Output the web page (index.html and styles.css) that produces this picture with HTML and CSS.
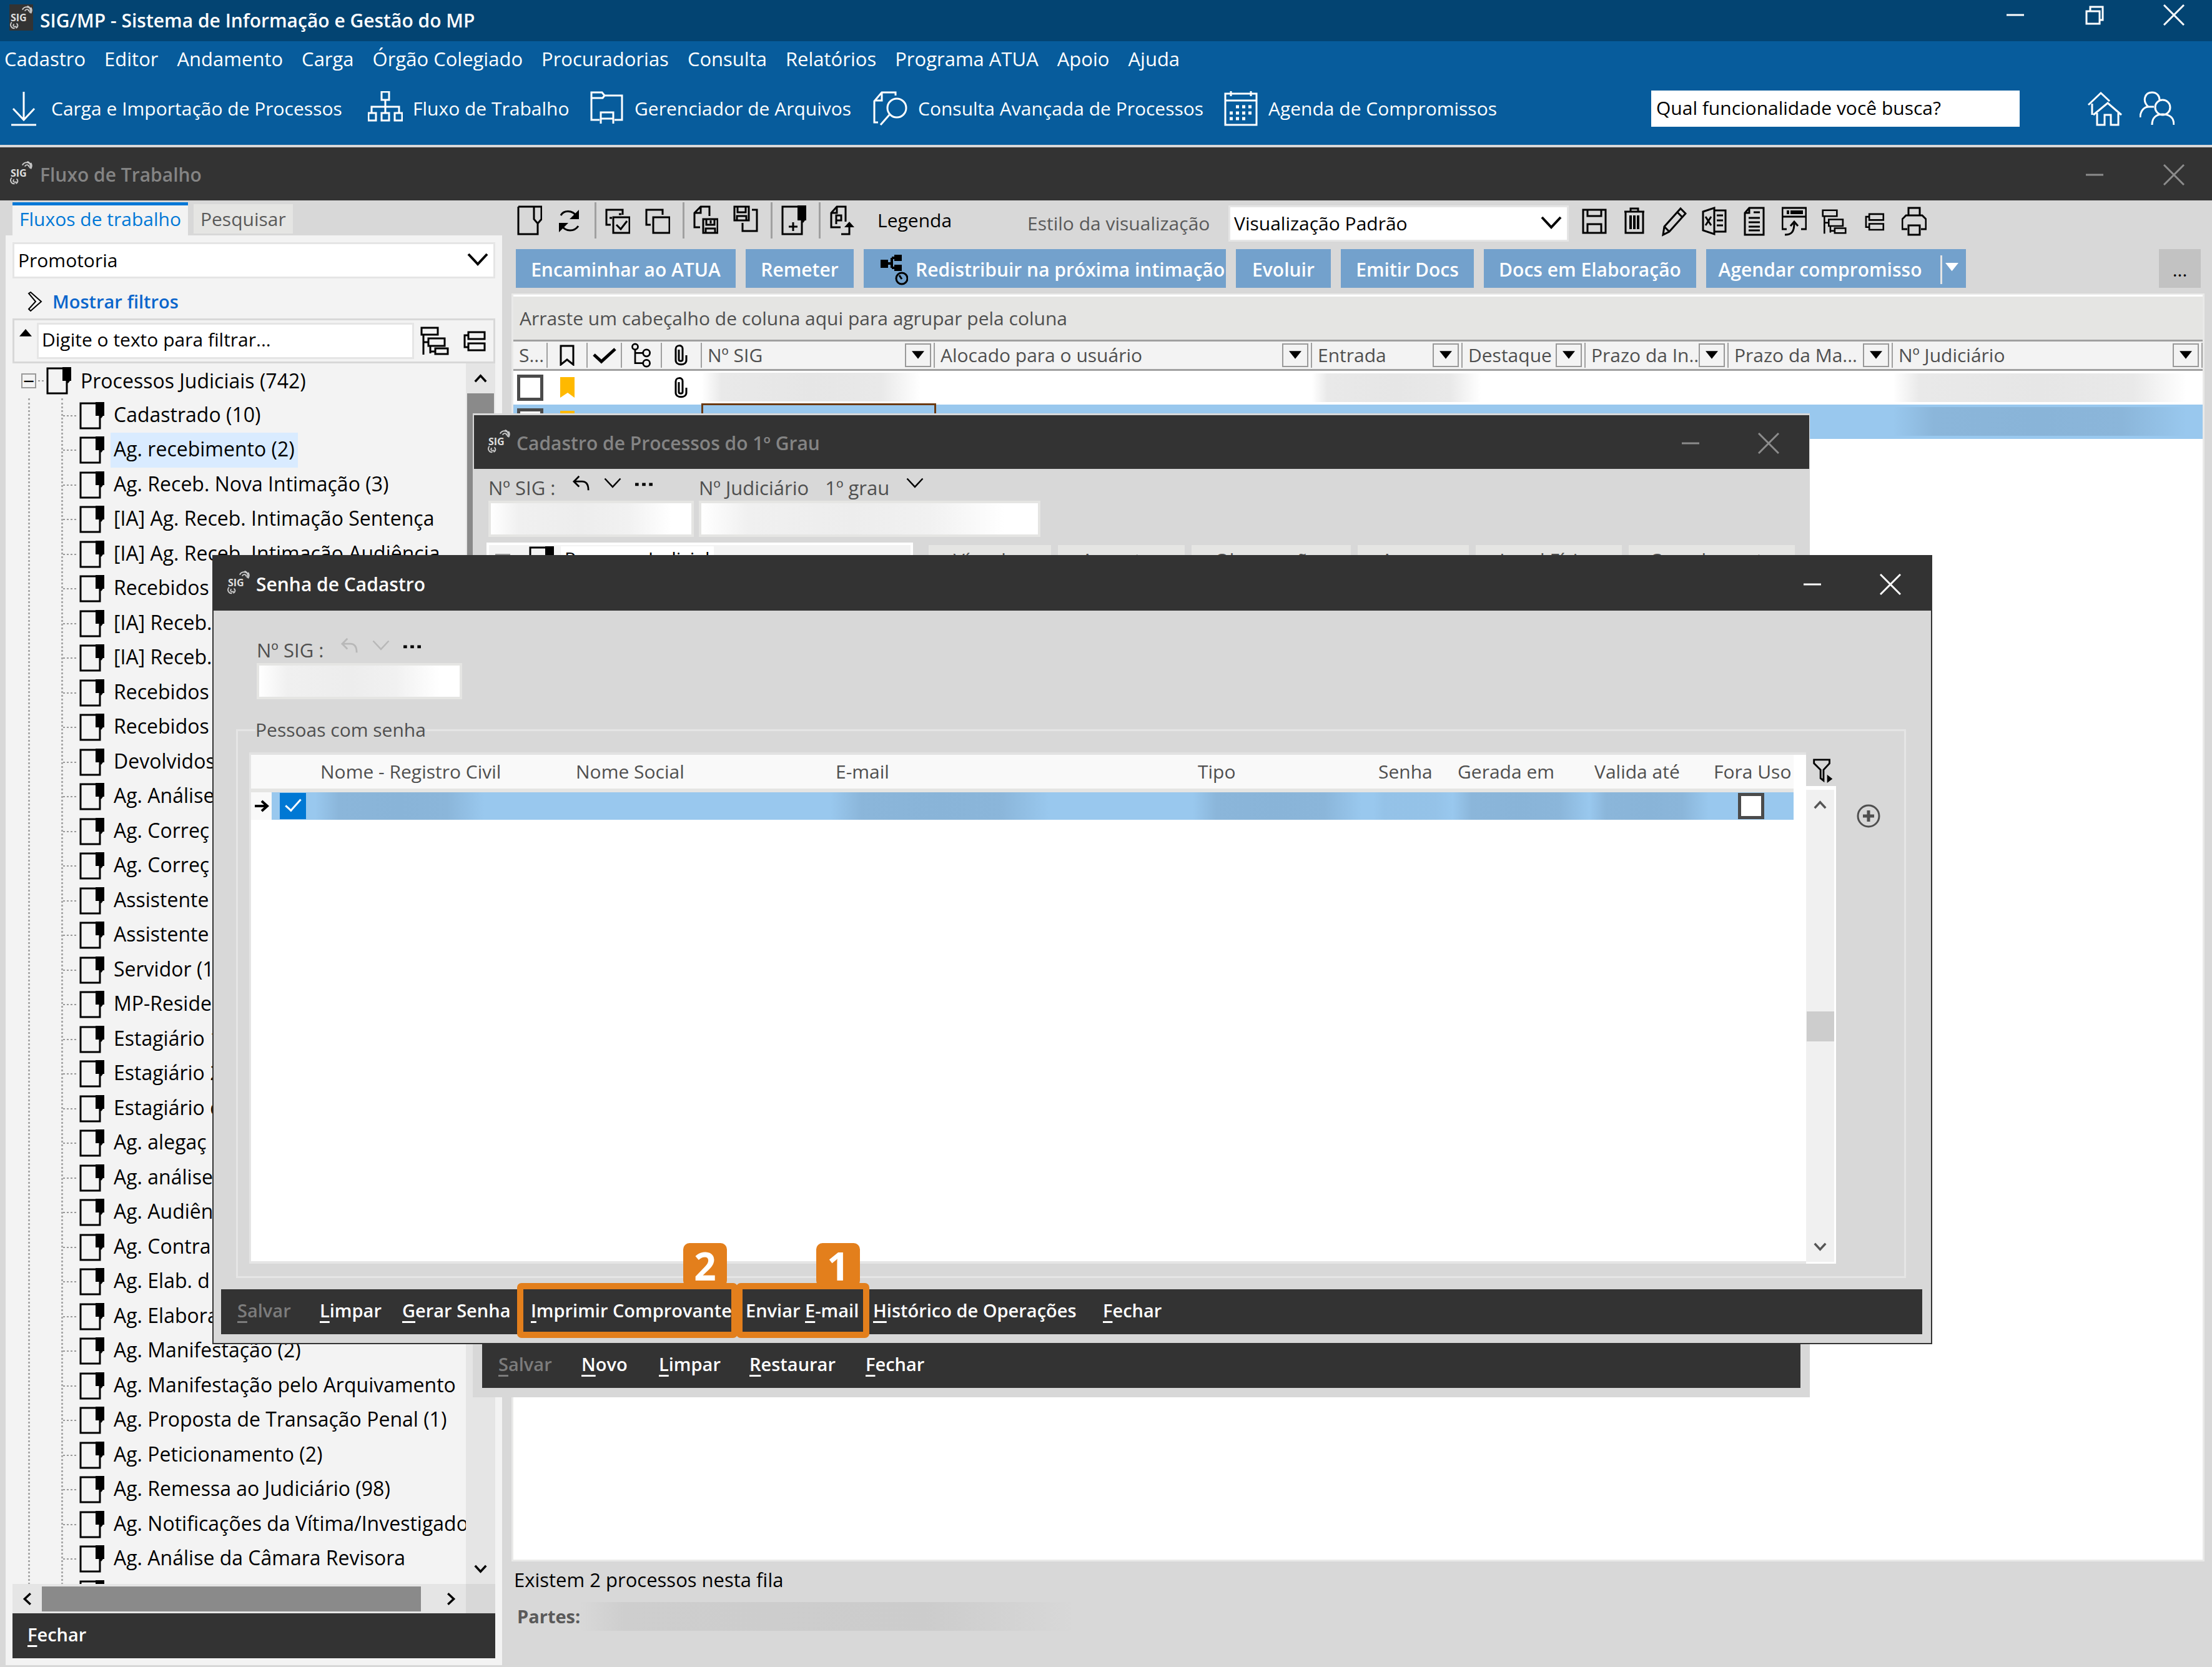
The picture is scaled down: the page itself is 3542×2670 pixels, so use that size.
FILE: index.html
```html
<!DOCTYPE html>
<html lang="pt-BR">
<head>
<meta charset="utf-8">
<title>SIG/MP - Sistema de Informação e Gestão do MP</title>
<link rel="stylesheet" href="styles.css">
</head>
<body>
<svg class="defs" aria-hidden="true">
  <symbol id="logo" viewBox="0 0 40 42"><text x="2" y="27" class="logo-text">SIG</text><path d="M22 8c2-5 8-6 12-3M26 10c2-4 7-3 7 1M30 2c5 1 7 7 4 11M36 4c2 3 2 7 0 10" /><path d="M4 29c-4 4-1 11 5 10M8 32c-3 2-1 6 4 4M12 31c3 2 3 6-1 8" /></symbol>
  <symbol id="min" viewBox="0 0 34 34"><path d="M3 17h28"/></symbol>
  <symbol id="restore" viewBox="0 0 34 34"><path d="M4 11h21v20H4zM10 11V4h20v21h-5"/></symbol>
  <symbol id="close" viewBox="0 0 34 34"><path d="M1 1l32 32M33 1L1 33"/></symbol>
  <symbol id="import" viewBox="0 0 56 56"><path d="M28 1v46M11 28l17 18 17-18M8 54h40"/></symbol>
  <symbol id="flow" viewBox="0 0 56 56"><path d="M22 1h12v13H22zM28 14v21M6 35V25h44v10M1 35h12v12H1zM22 35h12v12H22zM43 35h12v12H43z"/></symbol>
  <symbol id="folder" viewBox="0 0 56 56"><path d="M16 46H3V2h17l4 5h28v39H40M3 11h18l3-4M18 52V34h20v18M18 44h20"/></symbol>
  <symbol id="search" viewBox="0 0 56 56"><path d="M8 50H2V16L14 2h22v5M14 2v13H3M12 54l14-16"/><circle cx="38" cy="27" r="15"/></symbol>
  <symbol id="calendar" viewBox="0 0 56 56"><path d="M3 4h50v50H3zM3 15h50M12 0v8M44 0v8"/><path d="M20 25h26M10 35h36M10 44h26" stroke-dasharray="5 5" stroke-width="5"/></symbol>
  <symbol id="home" viewBox="0 0 56 56"><path d="M8 38V20M2 22L22 3l14 13M10 38l23-19 22 19M16 35v19h12V38h10v16h12V35"/></symbol>
  <symbol id="users" viewBox="0 0 56 56"><path d="M14 25C4 16 8 2 20 2c8 0 12 6 12 12M1 42c0-10 6-17 14-17h8M20 54c0-12 7-17 17-17s18 5 18 17"/><circle cx="37" cy="26" r="12"/></symbol>
  <symbol id="chev" viewBox="0 0 36 24"><path d="M3 3l15 16L33 3"/></symbol>
  <symbol id="dbl" viewBox="0 0 24 32"><path d="M2 3l3-2 17 15L5 31l-3-3 11-12z"/></symbol>
  <symbol id="treeexp" viewBox="0 0 46 46"><path d="M2 2h26v11H2zM13 19h26v12H13zM24 35h20v9H24zM5 13v32M5 25h8M16 31v12M16 40h8"/></symbol>
  <symbol id="treecol" viewBox="0 0 46 46"><path d="M14 9h26v11H14zM14 27h26v11H14zM14 14H8v19h6"/></symbol>
  <symbol id="doc" viewBox="0 0 40 44"><path d="M2 2h31v40H2z"/><path class="solid" d="M26 0h14v22h-2l-3 4-3-4h-6z"/></symbol>
  <symbol id="doclight" viewBox="0 0 40 48"><path d="M2 2h37v20l-6 7-6-7V2M2 2v44h31V27"/></symbol>
  <symbol id="refresh" viewBox="0 0 40 48"><path d="M6 16c4-8 18-10 26 2M34 33C28 42 14 43 7 32"/><path class="solid" d="M35 7v15H20zM3 43V28h15z"/></symbol>
  <symbol id="checkall" viewBox="0 0 40 48"><path d="M9 31H2V7h26v8M13 19h26v25H13zM18 31l7 7 10-13M7 20h4M22 14h4"/></symbol>
  <symbol id="uncheck" viewBox="0 0 40 48"><path d="M9 31H2V7h26v8M13 19h26v25H13z"/></symbol>
  <symbol id="docsave" viewBox="0 0 40 48"><path d="M11 35H2V12L12 2h14v15M12 2v10H2M16 22h23v22H16zM21 22v9h13v-9M20 44v-7h15v7M28 24v5"/></symbol>
  <symbol id="savedoc" viewBox="0 0 40 48"><path d="M2 2h23v22H2zM7 2v9h13V2M6 24v-7h15v7M30 7h8v34H15V28"/></symbol>
  <symbol id="docadd" viewBox="0 0 40 48"><path d="M2 2h31v44H2zM12 34h14M19 27v14"/><path class="solid" d="M26 0h14v24h-2l-3 4-3-4h-6z"/></symbol>
  <symbol id="docp" viewBox="0 0 40 48"><path d="M18 35H3V12L12 2h14v24M12 2v10H3M11 30V16h8v8h-8M19 46h13V32"/><path class="solid" d="M24 35l8-9 8 9z"/></symbol>
  <symbol id="save" viewBox="0 0 40 48"><path d="M2 5h36v37H2zM9 5v10h22V5M9 42V28h22v14"/></symbol>
  <symbol id="trash" viewBox="0 0 40 48"><path d="M4 8h32M14 8V3h12v5M6 8v34h28V8"/><path d="M14 14v22M20 14v22M26 14v22" stroke-width="4"/></symbol>
  <symbol id="pencil" viewBox="0 0 40 48"><path d="M2 45l2-13L30 3l8 8-26 29zM25 9l8 8M4 32l8 8"/></symbol>
  <symbol id="excel" viewBox="0 0 40 48"><path d="M2 8L20 2v42L2 38zM20 6h18v34H20M6 16l9 14M15 16L6 30M24 14h10M24 22h10M24 30h10"/></symbol>
  <symbol id="page" viewBox="0 0 40 48"><path d="M12 2h23v43H5V10zM12 2v8H5M19 9h10M11 18h18M11 25h18M11 32h18M11 38h18"/></symbol>
  <symbol id="panel" viewBox="0 0 40 48"><path d="M8 36H1V2h38v34h-8M1 16h38M5 45c10 0 15-4 15-18M14 31l6-7 6 7"/><path d="M8 9h4M14 9h20" stroke-width="6"/></symbol>
  <symbol id="printer" viewBox="0 0 40 48"><path d="M11 14V2h18v12M9 36H1V20l6-6h26l6 6v16h-8M11 30h18v15H11z"/></symbol>
  <symbol id="branch" viewBox="0 0 44 50"><path class="solid" d="M0 9h12v13H0zM22 1h12v10H22zM22 17h12v10H22z"/><path d="M12 15h6M18 6v16M18 6h5M18 22h5" stroke-width="4"/><circle cx="34" cy="39" r="9"/><path d="M30 34l4 6"/></symbol>
  <symbol id="bookmark" viewBox="0 0 24 34"><path d="M2 2h20v30l-10-8-10 8z"/></symbol>
  <symbol id="flag" viewBox="0 0 24 34"><path d="M0 0h23v33l-11-8-12 8z"/></symbol>
  <symbol id="tick" viewBox="0 0 38 34"><path d="M2 16l12 11L36 7" stroke-width="5"/></symbol>
  <symbol id="nodes" viewBox="0 0 38 44"><circle cx="8" cy="7" r="5"/><circle cx="28" cy="18" r="6"/><circle cx="28" cy="36" r="6"/><path d="M8 12v24h14M8 18h14"/></symbol>
  <symbol id="clip" viewBox="0 0 24 34"><path d="M8 8v16c0 3 6 3 6 0V6C14 0 3 0 3 7v18c0 9 17 9 17 0v-8"/></symbol>
  <symbol id="undo" viewBox="0 0 32 28"><path d="M12 2L3 11l9 9M3 11h14c7 0 11 5 11 15"/></symbol>
  <symbol id="dots" viewBox="0 0 32 28"><path d="M1 16h6M13 16h6M25 16h6" stroke-width="5"/></symbol>
  <symbol id="filter" viewBox="0 0 34 44"><path d="M2 3h26v6L18 20v18l-5-4V20L2 9z"/><path class="solid" d="M24 28l9 7-9 7z"/></symbol>
  <symbol id="plus" viewBox="0 0 40 40"><circle cx="20" cy="20" r="17"/><path d="M20 11v18M11 20h18" stroke-width="5"/></symbol>
  <symbol id="arrow" viewBox="0 0 24 24"><path d="M1 12h19M12 4l9 8-9 8" stroke-width="4"/></symbol>
  <symbol id="down" viewBox="0 0 24 16"><path class="solid" d="M0 0h24L12 15z"/></symbol>
  <symbol id="up" viewBox="0 0 24 16"><path class="solid" d="M0 16h24L12 2z"/></symbol>
</svg>

<header class="titlebar main-title">
  <svg class="logo boxed"><use href="#logo"/></svg>
  <h1>SIG/MP - Sistema de Informação e Gestão do MP</h1>
  <div class="controls"><button aria-label="Minimizar"><svg><use href="#min"/></svg></button><button aria-label="Restaurar"><svg><use href="#restore"/></svg></button><button aria-label="Fechar"><svg><use href="#close"/></svg></button></div>
</header>
<div class="ribbon">
  <nav class="menu"><a href="#">Cadastro</a><a href="#">Editor</a><a href="#">Andamento</a><a href="#">Carga</a><a href="#">Órgão Colegiado</a><a href="#">Procuradorias</a><a href="#">Consulta</a><a href="#">Relatórios</a><a href="#">Programa ATUA</a><a href="#">Apoio</a><a href="#">Ajuda</a></nav>
  <div class="shortcuts">
    <button class="s1"><svg><use href="#import"/></svg>Carga e Importação de Processos</button>
    <button class="s2"><svg><use href="#flow"/></svg>Fluxo de Trabalho</button>
    <button class="s3"><svg><use href="#folder"/></svg>Gerenciador de Arquivos</button>
    <button class="s4"><svg><use href="#search"/></svg>Consulta Avançada de Processos</button>
    <button class="s5"><svg><use href="#calendar"/></svg>Agenda de Compromissos</button>
    <input class="quick" type="text" aria-label="Busca de funcionalidade" value="Qual funcionalidade você busca?">
    <button aria-label="Início"><svg><use href="#home"/></svg></button>
    <button aria-label="Usuários"><svg><use href="#users"/></svg></button>
  </div>
</div>
<div class="titlebar flow-title inactive">
  <svg class="logo"><use href="#logo"/></svg>
  <h2>Fluxo de Trabalho</h2>
  <div class="controls"><button aria-label="Minimizar"><svg><use href="#min"/></svg></button><button aria-label="Fechar"><svg><use href="#close"/></svg></button></div>
</div>

<main class="workspace">
  <aside class="side">
    <div class="tabs"><button class="active">Fluxos de trabalho</button><button>Pesquisar</button></div>
    <div class="side-body">
      <div class="combo"><select aria-label="Unidade"><option>Promotoria</option></select><svg><use href="#chev"/></svg></div>
      <button class="show-filters"><svg><use href="#dbl"/></svg>Mostrar filtros</button>
      <div class="filter-row">
        <svg class="sort"><use href="#up"/></svg>
        <input type="text" aria-label="Filtro" value="Digite o texto para filtrar...">
        <button aria-label="Expandir"><svg><use href="#treeexp"/></svg></button>
        <button aria-label="Recolher"><svg><use href="#treecol"/></svg></button>
      </div>
      <div class="tree-area">
        <div class="tree">
          <div class="root"><button class="toggle" aria-label="Recolher">−</button><i class="dots"></i><svg class="doc"><use href="#doc"/></svg><span>Processos Judiciais (742)</span></div>
          <div class="trunk"><ul>
            <li><i class="dots"></i><svg class="doc"><use href="#doc"/></svg><span>Cadastrado (10)</span></li>
            <li><i class="dots"></i><svg class="doc"><use href="#doc"/></svg><span class="selected">Ag. recebimento (2)</span></li>
            <li><i class="dots"></i><svg class="doc"><use href="#doc"/></svg><span>Ag. Receb. Nova Intimação (3)</span></li>
            <li><i class="dots"></i><svg class="doc"><use href="#doc"/></svg><span>[IA] Ag. Receb. Intimação Sentença</span></li>
            <li><i class="dots"></i><svg class="doc"><use href="#doc"/></svg><span>[IA] Ag. Receb. Intimação Audiência</span></li>
            <li><i class="dots"></i><svg class="doc"><use href="#doc"/></svg><span>Recebidos</span></li>
            <li><i class="dots"></i><svg class="doc"><use href="#doc"/></svg><span>[IA] Receb.</span></li>
            <li><i class="dots"></i><svg class="doc"><use href="#doc"/></svg><span>[IA] Receb.</span></li>
            <li><i class="dots"></i><svg class="doc"><use href="#doc"/></svg><span>Recebidos</span></li>
            <li><i class="dots"></i><svg class="doc"><use href="#doc"/></svg><span>Recebidos</span></li>
            <li><i class="dots"></i><svg class="doc"><use href="#doc"/></svg><span>Devolvidos</span></li>
            <li><i class="dots"></i><svg class="doc"><use href="#doc"/></svg><span>Ag. Análise</span></li>
            <li><i class="dots"></i><svg class="doc"><use href="#doc"/></svg><span>Ag. Correç</span></li>
            <li><i class="dots"></i><svg class="doc"><use href="#doc"/></svg><span>Ag. Correç</span></li>
            <li><i class="dots"></i><svg class="doc"><use href="#doc"/></svg><span>Assistente</span></li>
            <li><i class="dots"></i><svg class="doc"><use href="#doc"/></svg><span>Assistente</span></li>
            <li><i class="dots"></i><svg class="doc"><use href="#doc"/></svg><span>Servidor (1)</span></li>
            <li><i class="dots"></i><svg class="doc"><use href="#doc"/></svg><span>MP-Reside</span></li>
            <li><i class="dots"></i><svg class="doc"><use href="#doc"/></svg><span>Estagiário 1</span></li>
            <li><i class="dots"></i><svg class="doc"><use href="#doc"/></svg><span>Estagiário 2</span></li>
            <li><i class="dots"></i><svg class="doc"><use href="#doc"/></svg><span>Estagiário d</span></li>
            <li><i class="dots"></i><svg class="doc"><use href="#doc"/></svg><span>Ag. alegaç</span></li>
            <li><i class="dots"></i><svg class="doc"><use href="#doc"/></svg><span>Ag. análise</span></li>
            <li><i class="dots"></i><svg class="doc"><use href="#doc"/></svg><span>Ag. Audiên</span></li>
            <li><i class="dots"></i><svg class="doc"><use href="#doc"/></svg><span>Ag. Contra</span></li>
            <li><i class="dots"></i><svg class="doc"><use href="#doc"/></svg><span>Ag. Elab. d</span></li>
            <li><i class="dots"></i><svg class="doc"><use href="#doc"/></svg><span>Ag. Elabora</span></li>
            <li><i class="dots"></i><svg class="doc"><use href="#doc"/></svg><span>Ag. Manifestação (2)</span></li>
            <li><i class="dots"></i><svg class="doc"><use href="#doc"/></svg><span>Ag. Manifestação pelo Arquivamento</span></li>
            <li><i class="dots"></i><svg class="doc"><use href="#doc"/></svg><span>Ag. Proposta de Transação Penal (1)</span></li>
            <li><i class="dots"></i><svg class="doc"><use href="#doc"/></svg><span>Ag. Peticionamento (2)</span></li>
            <li><i class="dots"></i><svg class="doc"><use href="#doc"/></svg><span>Ag. Remessa ao Judiciário (98)</span></li>
            <li><i class="dots"></i><svg class="doc"><use href="#doc"/></svg><span>Ag. Notificações da Vítima/Investigado</span></li>
            <li><i class="dots"></i><svg class="doc"><use href="#doc"/></svg><span>Ag. Análise da Câmara Revisora</span></li>
            <li><i class="dots"></i><svg class="doc"><use href="#doc"/></svg><span></span></li>
          </ul></div>
        </div>
        <div class="vscroll"><svg class="flip"><use href="#chev"/></svg><div class="thumb"></div><svg><use href="#chev"/></svg></div>
      </div>
      <div class="hscroll"><div class="track"><svg class="left"><use href="#chev"/></svg><div class="thumb"></div><svg class="right"><use href="#chev"/></svg></div><div class="corner"></div></div>
      <div class="bar side-bar"><button><u>F</u>echar</button></div>
    </div>
  </aside>

  <section class="content">
    <div class="tools">
      <button aria-label="Abrir"><svg><use href="#doclight"/></svg></button><button aria-label="Atualizar"><svg><use href="#refresh"/></svg></button><i class="sep"></i>
      <button aria-label="Marcar todos"><svg><use href="#checkall"/></svg></button><button aria-label="Desmarcar todos"><svg><use href="#uncheck"/></svg></button><i class="sep"></i>
      <button aria-label="Salvar documento"><svg><use href="#docsave"/></svg></button><button aria-label="Copiar documento"><svg><use href="#savedoc"/></svg></button><i class="sep"></i>
      <button aria-label="Adicionar"><svg><use href="#docadd"/></svg></button><i class="sep"></i>
      <button aria-label="Exportar"><svg><use href="#docp"/></svg></button>
      <button class="legend-btn">Legenda</button>
      <label for="estilo">Estilo da visualização</label>
      <div class="combo"><select id="estilo"><option>Visualização Padrão</option></select><svg><use href="#chev"/></svg></div>
      <button aria-label="Salvar"><svg><use href="#save"/></svg></button><button aria-label="Excluir"><svg><use href="#trash"/></svg></button><button aria-label="Editar"><svg><use href="#pencil"/></svg></button><button aria-label="Excel"><svg><use href="#excel"/></svg></button><button aria-label="Texto"><svg><use href="#page"/></svg></button><button aria-label="Painel"><svg><use href="#panel"/></svg></button><button aria-label="Expandir"><svg><use href="#treeexp"/></svg></button><button aria-label="Recolher"><svg><use href="#treecol"/></svg></button><button aria-label="Imprimir"><svg><use href="#printer"/></svg></button>
    </div>
    <div class="actions">
      <button class="a1">Encaminhar ao ATUA</button><button class="a2">Remeter</button><button class="a3"><svg><use href="#branch"/></svg>Redistribuir na próxima intimação</button><button class="a4">Evoluir</button><button class="a5">Emitir Docs</button><button class="a6">Docs em Elaboração</button><button class="a7"><span>Agendar compromisso</span><i></i><svg><use href="#down"/></svg></button><button class="more">...</button>
    </div>
    <div class="grid">
      <p class="group-hint">Arraste um cabeçalho de coluna aqui para agrupar pela coluna</p>
      <table class="cases">
        <colgroup><col class="c1"><col class="c2"><col class="c1"><col class="c2"><col class="c2"><col class="c3"><col class="c4"><col class="c5"><col class="c6"><col class="c7"><col class="c8"><col></colgroup>
        <thead><tr>
          <th><div>S...</div></th><th><div class="mid"><svg class="ic"><use href="#bookmark"/></svg></div></th><th><div class="mid"><svg class="big"><use href="#tick"/></svg></div></th><th><div class="mid"><svg class="big"><use href="#nodes"/></svg></div></th><th><div class="mid"><svg class="ic"><use href="#clip"/></svg></div></th>
          <th><div><span>Nº SIG</span><button aria-label="Filtrar Nº SIG"><svg><use href="#down"/></svg></button></div></th>
          <th><div><span>Alocado para o usuário</span><button aria-label="Filtrar usuário"><svg><use href="#down"/></svg></button></div></th>
          <th><div><span>Entrada</span><button aria-label="Filtrar entrada"><svg><use href="#down"/></svg></button></div></th>
          <th><div><span>Destaque</span><button aria-label="Filtrar destaque"><svg><use href="#down"/></svg></button></div></th>
          <th><div><span>Prazo da In...</span><button aria-label="Filtrar prazo"><svg><use href="#down"/></svg></button></div></th>
          <th><div><span>Prazo da Ma...</span><button aria-label="Filtrar prazo"><svg><use href="#down"/></svg></button></div></th>
          <th><div><span>Nº Judiciário</span><button aria-label="Filtrar Nº Judiciário"><svg><use href="#down"/></svg></button></div></th>
        </tr></thead>
        <tbody>
          <tr><td><input type="checkbox" aria-label="Selecionar processo 1"></td><td><svg class="flag"><use href="#flag"/></svg></td><td></td><td></td><td class="clip"><svg class="ic"><use href="#clip"/></svg></td><td><div class="smear w350"></div></td><td></td><td><div class="smear w270"></div></td><td></td><td></td><td></td><td><div class="smear w440"></div></td></tr>
          <tr class="sel"><td><input type="checkbox" aria-label="Selecionar processo 2"></td><td><svg class="flag"><use href="#flag"/></svg></td><td></td><td></td><td></td><td class="focus"></td><td></td><td></td><td></td><td></td><td></td><td><div class="smear blue w440"></div></td></tr>
        </tbody>
      </table>
    </div>
    <footer class="status"><p>Existem 2 processos nesta fila</p><p class="parties"><b>Partes:</b><span class="smear grey"></span></p></footer>
  </section>
</main>

<section class="window cadastro" aria-label="Cadastro de Processos do 1º Grau">
  <div class="titlebar inactive"><svg class="logo"><use href="#logo"/></svg><h2>Cadastro de Processos do 1º Grau</h2>
    <div class="controls"><button aria-label="Minimizar"><svg><use href="#min"/></svg></button><button aria-label="Fechar"><svg><use href="#close"/></svg></button></div></div>
  <div class="fields">
    <div class="field sig"><div class="caption"><label for="sig1">Nº SIG :</label><button aria-label="Voltar"><svg><use href="#undo"/></svg></button><button aria-label="Lista"><svg><use href="#chev"/></svg></button><button aria-label="Mais"><svg><use href="#dots"/></svg></button></div><input id="sig1" class="veiled" type="text"></div>
    <div class="field jud"><div class="caption"><label for="jud1">Nº Judiciário</label><span>1º grau</span><button aria-label="Grau"><svg><use href="#chev"/></svg></button></div><input id="jud1" class="veiled" type="text"></div>
  </div>
  <div class="record">
    <div class="record-tree"><i class="box"></i><svg class="doc"><use href="#doc"/></svg><span>Processo Judicial</span></div>
    <div class="record-tabs"><button class="t1">Vínculos</button><button class="t2">Assuntos</button><button class="t3">Observações</button><button class="t4">Anexos</button><button class="t5">Local Físico</button><button class="t6">Complemento</button></div>
  </div>
  <div class="bar"><button disabled><u>S</u>alvar</button><button><u>N</u>ovo</button><button><u>L</u>impar</button><button><u>R</u>estaurar</button><button><u>F</u>echar</button></div>
</section>

<section class="window senha" aria-label="Senha de Cadastro">
  <div class="titlebar"><svg class="logo"><use href="#logo"/></svg><h2>Senha de Cadastro</h2>
    <div class="controls"><button aria-label="Minimizar"><svg><use href="#min"/></svg></button><button aria-label="Fechar"><svg><use href="#close"/></svg></button></div></div>
  <div class="field sig"><div class="caption"><label for="sig2">Nº SIG :</label><button class="off" disabled aria-label="Voltar"><svg><use href="#undo"/></svg></button><button class="off" disabled aria-label="Lista"><svg><use href="#chev"/></svg></button><button aria-label="Mais"><svg><use href="#dots"/></svg></button></div><input id="sig2" class="veiled" type="text"></div>
  <fieldset>
    <legend>Pessoas com senha</legend>
    <div class="people-wrap">
      <div class="people-box">
        <table class="people">
          <colgroup><col class="p1"><col class="p2"><col class="p3"><col class="p4"><col class="p5"><col class="p6"><col class="p7"><col class="p8"><col class="p9"><col></colgroup>
          <thead><tr><th></th><th></th><th>Nome - Registro Civil</th><th>Nome Social</th><th>E-mail</th><th>Tipo</th><th>Senha</th><th>Gerada em</th><th>Valida até</th><th>Fora Uso</th></tr></thead>
          <tbody><tr><td class="ind"><svg><use href="#arrow"/></svg></td><td><input type="checkbox" checked aria-label="Selecionar pessoa"></td><td><div class="smear blue w270"></div></td><td></td><td><div class="smear blue w350"></div></td><td><div class="smear blue w270"></div></td><td><div class="smear blue faint"></div></td><td><div class="smear blue"></div></td><td><div class="smear blue"></div></td><td class="out"><input type="checkbox" aria-label="Fora de uso"></td></tr></tbody>
        </table>
      </div>
      <div class="people-side"><button aria-label="Filtrar"><svg><use href="#filter"/></svg></button>
        <div class="vscroll"><svg class="flip"><use href="#chev"/></svg><div class="thumb"></div><svg><use href="#chev"/></svg></div></div>
      <button class="add" aria-label="Adicionar"><svg><use href="#plus"/></svg></button>
    </div>
  </fieldset>
  <div class="bar"><button disabled><u>S</u>alvar</button><button><u>L</u>impar</button><button><u>G</u>erar Senha</button><button><u>I</u>mprimir Comprovante</button><button>Enviar <u>E</u>-mail</button><button><u>H</u>istórico de Operações</button><button><u>F</u>echar</button></div>
  <div class="mark m2"></div><div class="mark m1"></div>
  <b class="badge b2">2</b><b class="badge b1">1</b>
</section>
</body>
</html>
```

FILE: styles.css
```css
* { box-sizing: border-box; }
html, body { margin: 0; height: 100%; }
body {
  display: flex; flex-direction: column; position: relative; overflow: hidden;
  background: #d8d8d8; color: #000;
  font: 30px/40px "Open Sans", "Noto Sans", sans-serif;
}
h1, h2, p, ul { margin: 0; padding: 0; }
h1, h2 { font-size: 30px; font-weight: 600; white-space: nowrap; }
button { border: 0; padding: 0; background: none; color: inherit; font: inherit; white-space: nowrap; display: flex; align-items: center; }
input, select { font: inherit; color: inherit; border-radius: 0; margin: 0; }
a { color: inherit; text-decoration: none; }
svg { fill: none; stroke: currentColor; stroke-width: 3; flex: none; overflow: visible; display: block; }
.solid { fill: currentColor; stroke: none; }
.defs { position: absolute; width: 0; height: 0; }
.logo-text { font: 700 17px "Open Sans", sans-serif; fill: #ddd; stroke: none; }

/* title bars */
.titlebar { display: flex; align-items: center; flex: none; background: #333; color: #fff; }
.logo { width: 38px; height: 42px; color: #ccc; stroke-width: 2; margin-bottom: 6px; }
.controls { display: flex; margin-left: auto; }
.controls svg { width: 34px; height: 34px; }
.main-title { height: 66px; padding: 0 44px 0 15px; background: #034472; gap: 11px; }
.main-title .boxed { background: #333; margin-bottom: 10px; }
.main-title .controls { gap: 93px; margin-bottom: 18px; }
.flow-title { height: 89px; padding: 2px 44px 0 15px; gap: 11px; border-top: 4px solid #d8d8d8; }
.flow-title .controls { gap: 93px; }
.inactive { color: #8c8c8c; }
.inactive h2 { color: #848484; }

/* ribbon */
.ribbon { flex: none; height: 166px; background: #075c9c; color: #fff; }
.menu { display: flex; gap: 30px; padding: 8px 7px 0; font-size: 31px; white-space: nowrap; }
.shortcuts { display: flex; align-items: center; margin-top: 32px; padding: 0 60px 0 10px; height: 56px; }
.shortcuts svg { width: 56px; height: 56px; }
.shortcuts button { gap: 16px; flex: none; }
.s1 { width: 579px; }
.s2 { width: 355px; }
.s3 { width: 454px; }
.s4 { width: 561px; }
.shortcuts .quick { width: 590px; height: 58px; margin: 0 108px 0 auto; padding: 0 8px 4px; border: 0; color: #000; background: #fff; }
.shortcuts .quick + button { margin-right: 28px; }

/* workspace */
.workspace { flex: 1; min-height: 0; display: flex; gap: 15px; padding: 3px 12px 3px 9px; }
.side { width: 795px; flex: none; display: flex; flex-direction: column; }
.tabs { display: flex; align-items: flex-end; padding-left: 11px; height: 53px; gap: 9px; color: #5a5a5a; }
.tabs button { height: 47px; padding: 0 11px; background: #e5e5e3; margin-bottom: 3px; }
.tabs .active { height: 53px; margin: 0; padding-bottom: 4px; border-top: 5px solid #0078d7; background: #f3f3f3; color: #0078d7; }
.side-body { flex: 1; min-height: 0; display: flex; flex-direction: column; background: #f3f3f3; padding: 11px 11px 11px; }
.combo { position: relative; flex: none; height: 58px; }
.combo select { width: 100%; height: 100%; appearance: none; border: 3px solid #e5e5e5; background: #fff; padding: 0 6px; }
.combo svg { position: absolute; right: 10px; top: 16px; width: 36px; height: 24px; stroke-width: 4; pointer-events: none; }
.show-filters { height: 64px; padding-left: 24px; padding-top: 10px; gap: 16px; font-weight: 600; font-size: 29px; color: #0a66cc; flex: none; }
.show-filters svg { width: 24px; height: 32px; color: #000; stroke-width: 2; }
.filter-row { display: flex; align-items: center; height: 72px; border: 3px solid #d8d8d8; flex: none; }
.filter-row .sort { width: 20px; height: 14px; margin: 0 8px 28px; }
.filter-row input { flex: 1; min-width: 0; height: 58px; border: 3px solid #e5e5e5; padding: 0 5px 6px; }
.filter-row button { margin-left: 10px; }
.filter-row button + button { margin: 0 8px 0 17px; }
.filter-row button svg { width: 46px; height: 46px; }
.tree-area { flex: 1; min-height: 0; display: flex; }
.tree { flex: 1; min-width: 0; overflow: hidden; font-size: 32px; }
.root { height: 56px; display: flex; align-items: center; padding-left: 14px; white-space: nowrap; }
.toggle { width: 24px; height: 24px; border: 2px solid #999; justify-content: center; line-height: 20px; }
.dots { flex: none; width: 24px; height: 2px; background: repeating-linear-gradient(90deg, #999 0 3px, transparent 3px 6px); }
.root .dots { width: 10px; margin: 0 3px; }
.root span { padding-left: 15px; }
.doc { width: 40px; height: 44px; }
.trunk { margin-left: 25px; border-left: 3px dotted #aaa; }
.trunk ul { margin-left: 50px; border-left: 3px dotted #aaa; list-style: none; }
.trunk li { height: 55px; display: flex; align-items: center; white-space: nowrap; }
.trunk li:nth-child(even) { height: 56px; }
.trunk .doc { margin: 0 10px 0 2px; }
.trunk span { height: 100%; padding: 6px 5px 0; }
.selected { background: #d9ebff; }
.vscroll { width: 47px; background: #e5e5e5; display: flex; flex-direction: column; align-items: center; }
.vscroll svg { width: 21px; height: 14px; margin: 17px 0; stroke-width: 6; }
.flip { transform: rotate(180deg); }
.vscroll .thumb { width: 43px; height: 1300px; background: #8a8a8a; margin-bottom: auto; }
.hscroll { display: flex; height: 47px; flex: none; }
.track { flex: 1; display: flex; align-items: center; background: #e5e5e5; }
.track svg { width: 21px; height: 14px; stroke-width: 6; margin: 0 13px; }
.track .left { transform: rotate(90deg); }
.track .right { transform: rotate(-90deg); margin-left: auto; }
.track .thumb { width: 607px; height: 40px; background: #8a8a8a; }
.corner { width: 47px; background: #d8d8d8; }
.bar { flex: none; background: #333; color: #fff; height: 72px; display: grid; align-items: center; font-weight: 600; font-size: 29px; }
.bar button { display: block; text-align: left; }
.bar button:disabled { color: #7c7c7c; }
.bar u { text-underline-offset: 6px; text-decoration-thickness: 3px; }
.side-bar { padding: 0 24px 5px; }

/* case list */
.content { flex: 1; min-width: 0; display: flex; flex-direction: column; }
.tools { display: flex; align-items: flex-start; height: 66px; }
.tools > button { width: 64px; height: 58px; justify-content: center; flex: none; }
.tools > button:first-child { margin-left: -3px; }
.tools button svg { width: 40px; height: 48px; }
.tools .combo ~ button { padding-top: 4px; }
.sep { width: 3px; height: 58px; background: #a0a0a0; margin: 0 2px 0 8px; flex: none; }
.tools > .legend-btn { width: 240px; margin-left: 25px; justify-content: flex-start; }
.tools label { width: 322px; color: #5a5a5a; padding-top: 14px; flex: none; white-space: nowrap; }
.tools .combo { width: 545px; margin: 5px 9px 0 0; }
.actions { display: flex; gap: 16px; height: 62px; margin: 9px 6px 9px 7px; }
.actions button { justify-content: center; background: #73a1cc; color: #fff; font-weight: 600; flex: none; padding-top: 3px; }
.a1 { width: 352px; }
.a2 { width: 173px; }
.actions .a3 { width: 580px; gap: 12px; padding-left: 27px; justify-content: flex-start; }
.a3 svg { width: 44px; height: 50px; color: #000; }
.a4 { width: 152px; }
.a5 { width: 213px; }
.a6 { width: 340px; }
.a7 { width: 416px; gap: 10px; }
.a7 span { flex: 1; }
.a7 i { width: 3px; height: 46px; background: #e5e5e5; margin-right: -5px; }
.a7 svg { width: 21px; height: 14px; margin: 0 12px 8px 0; }
.actions .more { width: 67px; margin-left: auto; background: #c2c2c2; color: #000; font-weight: 400; }
.grid { flex: 1; min-height: 0; background: #fff; border: 3px solid #e9e9e8; border-top-width: 2px; padding-top: 3px; overflow: hidden; }
.group-hint { height: 69px; background: #e5e5e3; padding: 15px 10px; color: #4f4f4f; }
table { border-collapse: collapse; table-layout: fixed; width: 100%; }
th, td { padding: 0; text-align: left; font-weight: 400; white-space: nowrap; }
.c1 { width: 55px; }
.c2 { width: 64px; }
.c3 { width: 373px; }
.c4 { width: 604px; }
.c5 { width: 241px; }
.c6 { width: 197px; }
.c7 { width: 229px; }
.c8 { width: 263px; }
.cases th { height: 47px; background: #f3f3f3; border-top: 3px solid #a0a0a0; border-bottom: 3px solid #a0a0a0; color: #4f4f4f; }
.cases th div { height: 40px; margin: 1px 0; padding-left: 9px; border-right: 2px solid #a0a0a0; display: flex; align-items: center; overflow: hidden; }
.cases th span { flex: 1; min-width: 0; overflow: hidden; }
.cases th .mid { justify-content: center; padding: 0; color: #000; overflow: visible; }
.cases th button { margin: 0 4px 0 0; width: 42px; height: 38px; border: 2px solid #999; justify-content: center; flex: none; background: #f3f3f3; color: #000; }
.cases th button svg { width: 20px; height: 14px; }
.ic, .flag { width: 24px; height: 34px; }
.big { width: 38px; height: 40px; }
.cases td { height: 55px; }
.cases .flag { fill: #ffb900; stroke: none; margin: 0 0 0 20px; }
.clip .ic { margin-left: 19px; }
.sel { background: #99c8ee; }
.cases .focus { border: 3px solid #6b3a12; }
input[type="checkbox"] { appearance: none; display: block; width: 42px; height: 42px; border: 5px solid #4b4b4b; background: #fff; margin-left: 6px; }
.smear { height: 46px; background: linear-gradient(90deg, transparent, #e9e9e9 9%, #e6e6e6 50%, #e9e9e9 82%, transparent); margin-left: 0; }
.smear.blue { background: linear-gradient(90deg, transparent, #8bb6da 14%, #89b4d8 50%, #8bb6da 78%, transparent); }
.smear.grey { width: 790px; background: linear-gradient(90deg, transparent, #cecece 9%, #cccccc 70%, transparent); }
.smear.faint { opacity: .3; }
.w270 { width: 270px; }
.w350 { width: 350px; }
.w440 { width: 470px; }
.status { height: 166px; flex: none; padding: 9px 4px; font-size: 31px; }
.parties { display: flex; align-items: center; margin-top: 16px; padding-left: 5px; color: #5a5a5a; font-size: 29px; }

/* floating windows */
.window { position: absolute; background: #d8d8d8; display: flex; flex-direction: column; }
.cadastro { left: 757px; top: 662px; width: 2141px; height: 1576px; border-top: 3px solid #d8d8d8; }
.window .titlebar { height: 86px; padding: 3px 48px 0 21px; gap: 9px; }
.window .controls { gap: 91px; }
.cadastro .titlebar { margin: 0 1px 0 2px; }
.fields { display: flex; gap: 8px; padding-left: 25px; color: #4f4f4f; }
.caption { display: flex; align-items: center; height: 51px; padding-top: 8px; font-size: 31px; white-space: nowrap; }
.caption svg { width: 30px; height: 26px; }
.caption label + button { margin-left: 27px; }
.caption button { margin: 0 0 14px 20px; color: #000; }
.caption .off { color: #b8b8b8; }
.caption span { margin-left: 26px; }
.field input { display: block; width: 100%; height: 58px; border: 4px solid #e5e5e3; }
.veiled { background: linear-gradient(90deg, #fff, #f0f0f0 14%, #ededed 45%, #f1f1f1 68%, #fff 90%); }
.cadastro .sig { width: 329px; }
.jud { width: 547px; }
.jud .caption button { margin-left: 26px; }
.record { flex: 1; display: flex; gap: 25px; padding: 9px 0 0 22px; }
.record-tree { width: 683px; border: 4px solid #fff; background: #f3f3f3; display: flex; height: 60px; padding: 2px 0 0 10px; }
.record-tree .box { width: 24px; height: 24px; border: 2px solid #999; margin: 12px 30px 0 0; }
.record-tree span { background: #fff; height: 52px; margin-left: 11px; padding: 0 6px; }
.record-tabs { display: flex; gap: 11px; height: 52px; padding-top: 4px; }
.record-tabs button { background: #e5e5e3; color: #4f4f4f; justify-content: center; }
.t1 { width: 196px; }
.t2 { width: 203px; }
.t3 { width: 255px; }
.t4 { width: 178px; }
.t5 { width: 234px; }
.t6 { width: 266px; }
.cadastro .bar { margin: 0 15px 15px; padding: 0 26px 4px; grid-template-columns: 133px 124px 145px 186px 1fr; }

.senha { left: 340px; top: 889px; width: 2754px; height: 1264px; border: 2px solid #333; color: #4f4f4f; }
.senha .titlebar { height: 87px; }
.senha > .field { width: 329px; margin: 33px 0 0 69px; }
fieldset { flex: 1; margin: 29px 40px 18px 36px; border: 3px solid #e5e5e5; padding: 16px 37px 20px 18px; min-width: 0; min-height: 0; }
legend { padding: 0; margin-left: 10px; height: 40px; }
.people-wrap { display: flex; height: 819px; }
.people-box { flex: 1; min-width: 0; background: #fff; border-top: 4px solid #e2e2e2; border-left: 3px solid #e5e5e5; border-bottom: 4px solid #e5e5e5; padding-right: 20px; }
.people-side { width: 48px; display: flex; flex-direction: column; }
.people-side > button { height: 54px; color: #000; padding: 6px 0 0 10px; }
.people-side > button svg { width: 34px; height: 42px; }
.people-side .vscroll { flex: 1; width: 100%; background: #f0f0f0; color: #555; border: solid #fff; border-width: 6px 3px 3px 0; }
.people-side .vscroll .thumb { width: 44px; height: 48px; margin: 307px 0 auto; background: #cdcdcd; }
.add { align-self: flex-start; margin: 82px 0 0 32px; }
.add svg { width: 40px; height: 40px; }
.p1 { width: 33px; }
.p2 { width: 70px; }
.p3 { width: 409px; }
.p4 { width: 416px; }
.p5 { width: 580px; }
.p6 { width: 289px; }
.p7 { width: 127px; }
.p8 { width: 219px; }
.p9 { width: 191px; }
.people th { height: 57px; padding-left: 8px; background: #f9f9f9; border-bottom: 6px solid #e5e5e3; }
.people td { height: 44px; background: #99c8ee; }
.people td.ind { background: #f9f9f9; color: #000; }
.ind svg { width: 24px; height: 24px; margin-left: 5px; }
.people input { margin-left: 13px; }
.people .out input { margin-left: 47px; }
.people input:checked { border: 0; background: #0078d4; position: relative; }
.people input:checked::after { content: ""; position: absolute; left: 15px; top: 4px; width: 10px; height: 22px; border: solid #fff; border-width: 0 3px 3px 0; transform: rotate(42deg); }
.people .smear { height: 44px; margin: 0; }
.senha .bar { margin: 0 14px 14px 12px; padding: 0 26px 5px; grid-template-columns: 132px 132px 206px 344px 204px 368px 1fr; }
.mark { position: absolute; top: 1164px; height: 88px; border: 10px solid #e37f1c; border-radius: 7px; }
.m2 { left: 486px; width: 353px; }
.m1 { left: 837px; width: 213px; }
.badge { position: absolute; top: 1100px; width: 70px; height: 70px; border-radius: 10px; background: #e37f1c; color: #fff; font-size: 62px; line-height: 72px; text-align: center; }
.b2 { left: 752px; }
.b1 { left: 965px; }
```
